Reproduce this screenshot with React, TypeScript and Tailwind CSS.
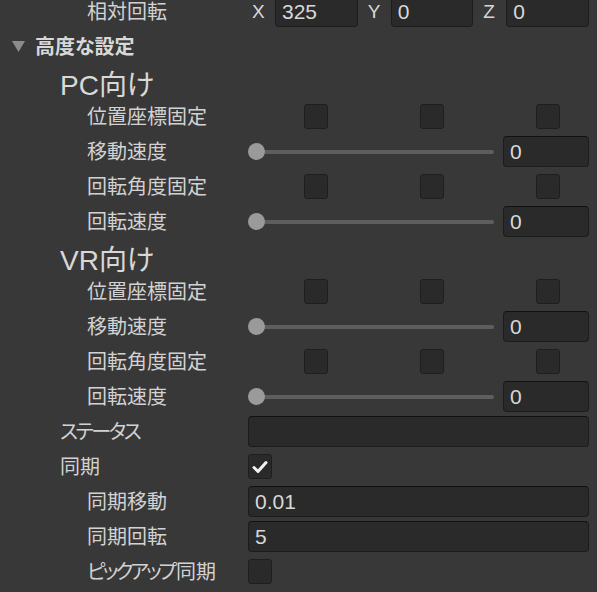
import React from 'react';

const font = {
  fontFamily: '"Liberation Sans", "Noto Sans CJK JP", sans-serif',
  fontFeatureSettings: '"palt"',
};

function Label({ text, indent, tight = false }: { text: React.ReactNode; indent: number; tight?: boolean }) {
  const pad = indent === 2 ? 'pl-[87px]' : indent === 1 ? 'pl-[60px]' : 'pl-[35px]';
  return (
    <div
      className={`w-[248px] shrink-0 ${pad} text-[20px] leading-none text-[#d2d2d2] whitespace-nowrap ${tight ? 'tracking-[-2.4px]' : ''}`}
    >
      {text}
    </div>
  );
}

function Field({ value, className = '' }: { value?: string; className?: string }) {
  return (
    <div
      className={`h-[31px] rounded-[4px] bg-[#2a2a2a] border border-[#1c1c1c] border-t-[#111111] flex items-center pl-[6px] text-[21px] text-[#d8d8d8] leading-none ${className}`}
    >
      {value}
    </div>
  );
}

function Check({ checked = false }: { checked?: boolean }) {
  return (
    <div className="w-[24px] h-[25px] rounded-[3px] bg-[#2a2a2a] border border-[#1e1e1e] flex items-center justify-center">
      {checked && (
        <svg width="16" height="14" viewBox="0 0 16 14">
          <path d="M2 7.5 L6 11.5 L14 2.5" fill="none" stroke="#f2f2f2" strokeWidth="3" strokeLinecap="round" strokeLinejoin="round" />
        </svg>
      )}
    </div>
  );
}

function Row({ children }: { children: React.ReactNode }) {
  return <div className="h-[35px] flex items-center pr-[8px]">{children}</div>;
}

function Vector3({ label, values }: { label: string; values: string[] }) {
  const axes = ['X', 'Y', 'Z'];
  return (
    <Row>
      <Label text={label} indent={2} />
      <div className="flex-1 grid grid-cols-3 gap-[6px]">
        {axes.map((a, i) => (
          <div key={a} className="flex items-center">
            <div className="w-[27px] pl-[4px] text-[19px] text-[#d8d8d8] leading-none">{a}</div>
            <Field value={values[i]} className="flex-1 h-[30px]" />
          </div>
        ))}
      </div>
    </Row>
  );
}

function ToggleRow({ label }: { label: string }) {
  return (
    <Row>
      <Label text={label} indent={2} />
      <div className="flex-1 grid grid-cols-3 gap-[6px]">
        {[0, 1, 2].map((i) => (
          <div key={i} className="flex items-center">
            <div className="w-[27px]" />
            <div className="flex-1 flex justify-center">
              <Check />
            </div>
          </div>
        ))}
      </div>
    </Row>
  );
}

function SliderRow({ label }: { label: string }) {
  return (
    <Row>
      <Label text={label} indent={2} />
      <div className="flex-1 flex items-center gap-[9px]">
        <div className="relative flex-1 h-[17px] flex items-center">
          <div className="ml-[8px] flex-1 h-[4px] rounded-full bg-[#5e5e5e]" />
          <div className="absolute left-0 top-0 w-[17px] h-[17px] rounded-full bg-[#9a9a9a]" />
        </div>
        <Field value="0" className="w-[86px] h-[30px]" />
      </div>
    </Row>
  );
}

function Header({ text }: { text: string }) {
  return (
    <div className="h-[35px] flex items-center pt-[8px] pl-[60px]">
      <span className="text-[28px] leading-none text-[#d8d8d8]">{text}</span>
    </div>
  );
}

export default function App() {
  return (
    <div className="w-[597px] h-[592px] overflow-hidden bg-[#383838]" style={font}>
      <div className="-mt-[6px]">
        <Vector3 label="相対回転" values={['325', '0', '0']} />

        {/* Foldout */}
        <div className="h-[35px] flex items-center">
          <svg className="ml-[12px]" width="13" height="11" viewBox="0 0 13 11">
            <path d="M0 0 H13 L6.5 11 Z" fill="#8c8c8c" />
          </svg>
          <span className="ml-[10px] text-[20px] font-bold leading-none text-[#d8d8d8]">高度な設定</span>
        </div>

        <Header text="PC向け" />
        <ToggleRow label="位置座標固定" />
        <SliderRow label="移動速度" />
        <ToggleRow label="回転角度固定" />
        <SliderRow label="回転速度" />

        <Header text="VR向け" />
        <ToggleRow label="位置座標固定" />
        <SliderRow label="移動速度" />
        <ToggleRow label="回転角度固定" />
        <SliderRow label="回転速度" />

        <Row>
          <Label text="ステータス" indent={1} tight />
          <Field className="flex-1" />
        </Row>
        <Row>
          <Label text="同期" indent={1} />
          <Check checked />
        </Row>
        <Row>
          <Label text="同期移動" indent={2} />
          <Field value="0.01" className="flex-1" />
        </Row>
        <Row>
          <Label text="同期回転" indent={2} />
          <Field value="5" className="flex-1" />
        </Row>
        <Row>
          <Label
            text={
              <>
                <span className="tracking-[-3px]">ピックアップ</span>
                <span className="ml-[2px]">同期</span>
              </>
            }
            indent={2}
          />
          <Check />
        </Row>
      </div>
    </div>
  );
}
